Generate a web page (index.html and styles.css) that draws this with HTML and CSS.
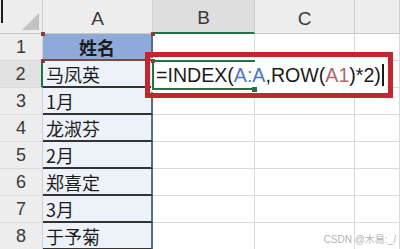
FILE: index.html
```html
<!DOCTYPE html>
<html lang="zh-CN">
<head>
    <meta charset="UTF-8">
    <title>INDEX 公式</title>
    <link rel="stylesheet" href="styles.css">
</head>
<body>
    <div class="sheet">
        <div class="corner"><span class="corner-tri"></span></div>
        <div class="col-head">A</div>
        <div class="col-head active-col">B</div>
        <div class="col-head">C</div>
        <div class="col-head"></div>

        <div class="row-head">1</div>
        <div class="cell col-a title">姓名</div>
        <div class="cell"></div><div class="cell"></div><div class="cell"></div>

        <div class="row-head active-row">2</div>
        <div class="cell col-a">马凤英</div>
        <div class="cell"></div><div class="cell"></div><div class="cell"></div>

        <div class="row-head">3</div>
        <div class="cell col-a">1月</div>
        <div class="cell"></div><div class="cell"></div><div class="cell"></div>

        <div class="row-head">4</div>
        <div class="cell col-a">龙淑芬</div>
        <div class="cell"></div><div class="cell"></div><div class="cell"></div>

        <div class="row-head">5</div>
        <div class="cell col-a">2月</div>
        <div class="cell"></div><div class="cell"></div><div class="cell"></div>

        <div class="row-head">6</div>
        <div class="cell col-a">郑喜定</div>
        <div class="cell"></div><div class="cell"></div><div class="cell"></div>

        <div class="row-head">7</div>
        <div class="cell col-a">3月</div>
        <div class="cell"></div><div class="cell"></div><div class="cell"></div>

        <div class="row-head">8</div>
        <div class="cell col-a">于予菊</div>
        <div class="cell"></div><div class="cell"></div><div class="cell"></div>

        <!-- overlays: editor, active cell, annotation -->
        <div class="editor">=INDEX(<span class="ref-blue">A:A</span>,ROW(<span class="ref-red">A1</span>)*2)<span class="caret"></span></div>
        <div class="active-cell"><span class="fill-handle"></span></div>
        <div class="callout"></div>
        <span class="mark mark-tl"></span>
        <span class="mark mark-tr"></span>
        <span class="mark mark-bl"></span>
        <span class="mark mark-br"></span>
        <span class="cursor-line"></span>
        <div class="watermark">CSDN @木易:_/</div>
    </div>
</body>
</html>
```

FILE: styles.css
```css
body {
    margin: 0;
    background: #ffffff;
    overflow: hidden;
    font-family: "Liberation Sans", "Noto Sans CJK SC", sans-serif;
}
.sheet {
    position: relative;
    display: grid;
    grid-template-columns: 43px 110px 102px 100px 45px;
    grid-template-rows: 34px repeat(8, 27px);
    width: 400px;
    height: 249px;
    overflow: hidden;
}
.corner {
    position: relative;
    background: #ededed;
    border-right: 1px solid #d0d0d0;
    border-bottom: 1px solid #c8c8c8;
}
.corner-tri {
    position: absolute;
    right: 3px;
    bottom: 3px;
    width: 17px;
    height: 17px;
    background: #c2c2c2;
    clip-path: polygon(100% 0, 100% 100%, 0 100%);
}
.col-head {
    display: flex;
    align-items: flex-end;
    justify-content: center;
    padding-bottom: 3px;
    box-sizing: border-box;
    background: #ededed;
    border-right: 1px solid #d0d0d0;
    border-bottom: 1px solid #c8c8c8;
    font-size: 19px;
    color: #3a3a3a;
}
.active-col {
    background: #dedede;
    border-bottom: 2px solid #217346;
}
.row-head {
    display: flex;
    align-items: center;
    justify-content: center;
    background: #ededed;
    border-right: 1px solid #d0d0d0;
    border-bottom: 1px solid #dadada;
    font-size: 18px;
    color: #3a3a3a;
}
.active-row {
    background: #e2e2e2;
    border-right: 2px solid #217346;
}
.cell {
    box-sizing: border-box;
    border-right: 1px solid #d9d9d9;
    border-bottom: 1px solid #d9d9d9;
}
.col-a {
    display: flex;
    align-items: center;
    padding-left: 3px;
    background: #edf1f8;
    border-right: 2px solid #52707e;
    border-bottom: 2px solid #333333;
    font-family: "Noto Sans CJK SC", sans-serif;
    font-size: 18px;
    color: #1c1c1c;
}
.title {
    justify-content: center;
    padding-left: 0;
    background: #8eaadb;
    border-bottom-color: #7a4a42;
    font-weight: bold;
}
.editor {
    position: absolute;
    left: 151px;
    top: 58px;
    width: 236px;
    height: 34px;
    box-sizing: border-box;
    padding-left: 5px;
    display: flex;
    align-items: center;
    background: #ffffff;
    font-size: 19.6px;
    color: #1a1a1a;
    white-space: nowrap;
}
.ref-blue {
    color: #4a78c0;
}
.ref-red {
    color: #b0666c;
}
.caret {
    display: inline-block;
    width: 2px;
    height: 22px;
    margin-left: 1px;
    background: #1a1a1a;
}
.active-cell {
    position: absolute;
    left: 152px;
    top: 60px;
    width: 103px;
    height: 30px;
    box-sizing: border-box;
    border: 2px solid #217346;
    border-right: none;
}
.fill-handle {
    position: absolute;
    right: -2px;
    bottom: -4px;
    width: 5px;
    height: 5px;
    background: #217346;
}
.callout {
    position: absolute;
    left: 145px;
    top: 52px;
    width: 248px;
    height: 46px;
    box-sizing: border-box;
    border: 5px solid #c4262e;
}
.mark {
    position: absolute;
    width: 4px;
    height: 4px;
    background: #8a3c38;
}
.mark-tl { left: 41px; top: 32px; }
.mark-tr { left: 151px; top: 32px; }
.mark-bl { left: 41px; top: 59px; }
.mark-br { left: 151px; top: 59px; }
.cursor-line {
    position: absolute;
    left: 1px;
    top: 0;
    width: 2px;
    height: 23px;
    background: #1a1a1a;
}
.watermark {
    position: absolute;
    right: 4px;
    bottom: 3px;
    font-size: 10px;
    color: #b4b4b4;
}
```
